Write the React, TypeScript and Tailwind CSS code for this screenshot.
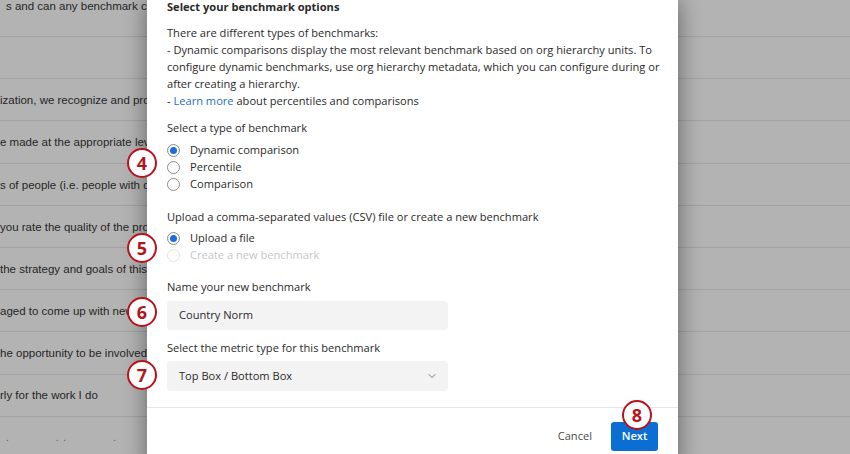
import { ChevronDown } from "lucide-react";

const rows = [
  "s and can any benchmark could",
  "",
  "ization, we recognize and promote",
  "e made at the appropriate level",
  "s of people (i.e. people with diverse",
  "you rate the quality of the products",
  "the strategy and goals of this company",
  "aged to come up with new ideas",
  "he opportunity to be involved in",
  "rly for the work I do",
];

const Radio = ({ checked, disabled, label }: { checked?: boolean; disabled?: boolean; label: string }) => (
  <div className="flex items-center h-[17px]">
    <span
      className={`w-[13px] h-[13px] rounded-full border flex items-center justify-center bg-white ${
        disabled ? "border-[#e2e2e2]" : "border-[#8c8c8c]"
      }`}
    >
      {checked && <span className="w-[7px] h-[7px] rounded-full bg-[#1d6fd8]" />}
    </span>
    <span className={`ml-[10px] ${disabled ? "text-[#c6c6c6]" : "text-[#2a2a2a]"}`}>{label}</span>
  </div>
);

const Badge = ({ n, className }: { n: number; className: string }) => (
  <div
    className={`absolute w-[30px] h-[30px] rounded-full bg-white border-[2.5px] border-[#b8121c] flex items-center justify-center text-[#b3141d] font-bold text-[18px] leading-none ${className}`}
    style={{ fontFamily: "'Open Sans', sans-serif" }}
  >
    {n}
  </div>
);

export default function App() {
  return (
    <div className="relative w-[850px] h-[454px] overflow-hidden bg-[#b3b3b3]" style={{ fontFamily: "'Liberation Sans', Arial, sans-serif" }}>
      {/* page behind the overlay */}
      <div className="text-[11.5px] text-[#262626] whitespace-nowrap">
        <div className="h-[37px] border-b border-[#a2a2a2] overflow-hidden">
          <div className="pl-[6px] mt-[-2px]">{rows[0]}</div>
        </div>
        {rows.slice(1).map((r, i) => (
          <div key={i} className="h-[42.2px] border-b border-[#a2a2a2] flex items-center pt-[2px]">
            {r}
          </div>
        ))}
        <div className="h-[42px] flex items-center gap-[46px] pl-[6px] text-[#555] text-[10px] tracking-widest">
          <span>.</span>
          <span>. .</span>
          <span>.</span>
          <span>. .</span>
          <span>.</span>
          <span>.</span>
        </div>
      </div>

      {/* modal */}
      <div
        className="absolute top-0 left-[147px] w-[531px] h-[470px] bg-white shadow-[0_0_22px_rgba(0,0,0,0.45)] text-[11.1px] text-[#2a2a2a] whitespace-nowrap"
        style={{ fontFamily: "'Open Sans', sans-serif" }}
      >
        <div className="px-[20px]">
          <div className="font-bold text-[11.1px] leading-[14px]">Select your benchmark options</div>
          <div className="mt-[10px] leading-[17px]">
            <div>There are different types of benchmarks:</div>
            <div>- Dynamic comparisons display the most relevant benchmark based on org hierarchy units. To</div>
            <div>configure dynamic benchmarks, use org hierarchy metadata, which you can configure during or</div>
            <div>after creating a hierarchy.</div>
            <div>
              - <span className="text-[#1f6fc4]">Learn more</span> about percentiles and comparisons
            </div>
          </div>

          <div className="mt-[10px] leading-[17px]">Select a type of benchmark</div>
          <div className="mt-[6px]">
            <Radio checked label="Dynamic comparison" />
            <Radio label="Percentile" />
            <Radio label="Comparison" />
          </div>

          <div className="mt-[15px] leading-[17px]">Upload a comma-separated values (CSV) file or create a new benchmark</div>
          <div className="mt-[5px]">
            <Radio checked label="Upload a file" />
            <Radio disabled label="Create a new benchmark" />
          </div>

          <div className="mt-[14px] leading-[17px]">Name your new benchmark</div>
          <div className="mt-[6px] w-[281px] h-[29px] rounded-[4px] bg-[#f3f3f3] flex items-center px-[12px]">Country Norm</div>

          <div className="mt-[9px] leading-[17px]">Select the metric type for this benchmark</div>
          <div className="mt-[5px] w-[281px] h-[30px] rounded-[4px] bg-[#f3f3f3] flex items-center justify-between pl-[12px] pr-[10px]">
            <span>Top Box / Bottom Box</span>
            <ChevronDown size={12} strokeWidth={1.5} className="text-[#555]" />
          </div>
        </div>

        <div className="mt-[16px] border-t border-[#e6e6e6]" />

        <div className="flex justify-end items-center gap-[19px] pr-[20px] pt-[14px]">
          <span className="text-[#4a4a4a]">Cancel</span>
          <span className="w-[47px] h-[29px] rounded-[3px] bg-[#0b6ed2] text-white font-semibold flex items-center justify-center">
            Next
          </span>
        </div>
      </div>

      <Badge n={4} className="left-[127px] top-[148px]" />
      <Badge n={5} className="left-[127px] top-[233px]" />
      <Badge n={6} className="left-[127px] top-[297px]" />
      <Badge n={7} className="left-[127px] top-[360px]" />
      <Badge n={8} className="left-[622px] top-[400px]" />
    </div>
  );
}
